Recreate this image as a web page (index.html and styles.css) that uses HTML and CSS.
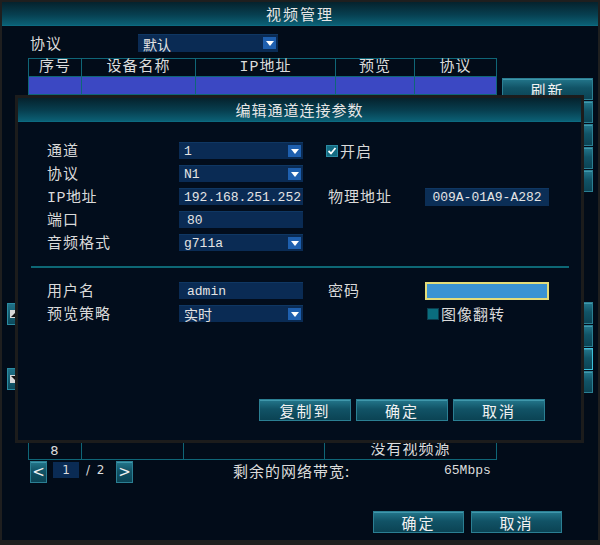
FILE: index.html
```html
<!DOCTYPE html>
<html lang="zh">
<head>
<meta charset="utf-8">
<title>视频管理</title>
<link rel="stylesheet" href="styles.css">
</head>
<body>
<div class="win">
  <div class="titlebar">视频管理</div>
  <div class="proto-row">
    <span class="lbl top-lbl">协议</span>
    <div class="field select w140"><span>默认</span><i class="arrow"></i></div>
  </div>
  <div class="middle">
    <div class="gutter">
      <div class="scroll-btn first"><svg width="8" height="8" viewBox="0 0 8 8"><rect width="8" height="8" fill="#d8d8d8"/><path d="M1 7 L7 7 L7 1 Z" fill="#111"/></svg></div>
      <div class="scroll-btn second"><svg width="8" height="8" viewBox="0 0 8 8"><rect width="8" height="8" fill="#d8d8d8"/><path d="M1 1 L7 1 L7 7 Z" fill="#111"/></svg></div>
    </div>
    <div class="tables">
      <div class="tbl t1">
        <div class="row head"><div>序号</div><div>设备名称</div><div>IP地址</div><div>预览</div><div>协议</div></div>
        <div class="row sel"><div></div><div></div><div></div><div></div><div></div></div>
        <div class="row"><div></div><div></div><div></div><div></div><div></div></div>
        <div class="row"><div></div><div></div><div></div><div></div><div></div></div>
        <div class="row"><div></div><div></div><div></div><div></div><div></div></div>
        <div class="row"><div></div><div></div><div></div><div></div><div></div></div>
        <div class="row"><div></div><div></div><div></div><div></div><div></div></div>
        <div class="row"><div></div><div></div><div></div><div></div><div></div></div>
        <div class="row"><div></div><div></div><div></div><div></div><div></div></div>
      </div>
      <div class="tbl t2">
        <div class="row head"><div></div><div></div><div></div><div></div></div>
        <div class="row"><div></div><div></div><div></div><div></div></div>
        <div class="row"><div></div><div></div><div></div><div></div></div>
        <div class="row"><div></div><div></div><div></div><div></div></div>
        <div class="row"><div></div><div></div><div></div><div></div></div>
        <div class="row"><div></div><div></div><div></div><div></div></div>
        <div class="row"><div></div><div></div><div></div><div></div></div>
        <div class="row"><div></div><div></div><div></div><div></div></div>
        <div class="row"><div>8</div><div></div><div></div><div>没有视频源</div></div>
      </div>
      <div class="pager">
        <div class="btn page-btn">&lt;</div>
        <div class="page-box">1</div>
        <span class="page-total">/ 2</span>
        <div class="btn page-btn">&gt;</div>
        <span class="bw-lbl">剩余的网络带宽:</span>
        <span class="bw-val">65Mbps</span>
      </div>
    </div>
    <div class="side">
      <div class="btn side-btn">刷新</div>
      <div class="btn side-btn"></div>
      <div class="btn side-btn"></div>
      <div class="btn side-btn"></div>
      <div class="btn side-btn"></div>
      <div class="btn side-btn gap-top"></div>
      <div class="btn side-btn"></div>
      <div class="btn side-btn focus"></div>
      <div class="btn side-btn"></div>
    </div>
  </div>
  <div class="footer">
    <div class="btn foot-btn">确定</div>
    <div class="btn foot-btn">取消</div>
  </div>

  <div class="dialog">
    <div class="dlg-title">编辑通道连接参数</div>
    <div class="form first-form">
      <span class="lbl">通道</span>
      <div class="field select"><span class="mono">1</span><i class="arrow"></i></div>
      <span></span>
      <div class="check-line"><i class="check on"><svg width="10" height="10" viewBox="0 0 10 10"><path d="M1.5 5 L4 7.5 L8.5 2" stroke="#fff" stroke-width="1.8" fill="none"/></svg></i><span class="lbl">开启</span></div>

      <span class="lbl">协议</span>
      <div class="field select"><span class="mono">N1</span><i class="arrow"></i></div>
      <span></span><span></span><span></span>

      <span class="lbl lbl-latin">IP地址</span>
      <div class="field"><span class="mono">192.168.251.252</span></div>
      <span></span>
      <span class="lbl lbl2">物理地址</span>
      <div class="field mac"><span class="mono">009A-01A9-A282</span></div>

      <span class="lbl">端口</span>
      <div class="field"><span class="mono pad-port">80</span></div>
      <span></span><span></span><span></span>

      <span class="lbl">音频格式</span>
      <div class="field select"><span class="mono">g711a</span><i class="arrow"></i></div>
      <span></span><span></span><span></span>
    </div>
    <div class="sep"></div>
    <div class="form second-form">
      <span class="lbl">用户名</span>
      <div class="field"><span class="mono pad-user">admin</span></div>
      <span></span>
      <span class="lbl lbl2">密码</span>
      <div class="field pwd"></div>

      <span class="lbl">预览策略</span>
      <div class="field select"><span>实时</span><i class="arrow"></i></div>
      <span></span>
      <span></span>
      <div class="check-line flip"><i class="check off"></i><span class="lbl">图像翻转</span></div>
    </div>
    <div class="dlg-buttons">
      <div class="btn dlg-btn">复制到</div>
      <div class="btn dlg-btn">确定</div>
      <div class="btn dlg-btn">取消</div>
    </div>
  </div>
</div>
</body>
</html>
```

FILE: styles.css
```css
html, body {
  margin: 0;
  padding: 0;
  background: #000;
}

body {
  font-family: "Liberation Mono", "Noto Sans CJK SC", monospace;
  color: #dcdcdc;
}

.win {
  position: relative;
  width: 600px;
  height: 545px;
  box-sizing: border-box;
  border: 2px solid #1f1f1f;
  border-bottom-width: 5px;
  background: #020c19;
  overflow: hidden;
}

.titlebar {
  height: 24px;
  line-height: 24px;
  text-align: center;
  font-family: "Noto Sans CJK SC", sans-serif;
  font-size: 15px;
  letter-spacing: 2px;
  color: #e6e6e6;
  background: linear-gradient(to bottom, #05222d 0%, #073f50 55%, #0b6075 100%);
  border-bottom: 1px solid #0c6a80;
  box-sizing: border-box;
}

.lbl {
  font-family: "Noto Sans CJK SC", sans-serif;
  font-size: 15px;
  letter-spacing: 1px;
  color: #dadada;
  white-space: nowrap;
  margin-top: -2px;
}

.lbl-latin {
  font-family: "Liberation Mono", "Noto Sans CJK SC", monospace;
  letter-spacing: 0.5px;
}

.mono {
  font-family: "Liberation Mono", monospace;
  font-size: 13px;
  letter-spacing: 0;
  color: #e4e4e4;
}

.proto-row {
  display: flex;
  align-items: center;
  margin-top: 8px;
  height: 18px;
  padding-left: 28px;
}

.top-lbl {
  width: 108px;
}

.field {
  position: relative;
  box-sizing: border-box;
  height: 17px;
  background: #0a2b54;
  border-top: 1px solid #0f3763;
  display: flex;
  align-items: center;
  padding-left: 5px;
  font-family: "Noto Sans CJK SC", sans-serif;
  font-size: 14px;
  color: #e2e2e2;
}

.w140 {
  width: 140px;
  height: 18px;
}

.arrow {
  position: absolute;
  right: 2px;
  top: 2px;
  width: 13px;
  height: 12px;
  background: #1e5fae;
  display: flex;
  align-items: center;
  justify-content: center;
}

.arrow::after {
  content: "";
  border-left: 4px solid transparent;
  border-right: 4px solid transparent;
  border-top: 5px solid #fff;
}

.middle {
  display: flex;
  margin-top: 6px;
}

.gutter {
  width: 26px;
  display: flex;
  flex-direction: column;
}

.scroll-btn {
  width: 20px;
  height: 22px;
  margin-left: 5px;
  box-sizing: border-box;
  border: 1px solid #2a8aa0;
  background: linear-gradient(#1f7187, #0c495b);
  display: flex;
  align-items: center;
  padding-left: 2px;
}

.scroll-btn.first { margin-top: 245px; }
.scroll-btn.second { margin-top: 43px; }

.tables {
  width: 469px;
  display: flex;
  flex-direction: column;
}

.tbl {
  border-left: 1px solid #0f6677;
  border-top: 1px solid #0f6677;
}

.row {
  display: grid;
  height: 18px;
}

.t1 .row { grid-template-columns: 53px 114px 140px 79px 82px; }
.t2 .row { grid-template-columns: 53px 102px 141px 172px; }

.row > div {
  box-sizing: border-box;
  border-right: 1px solid #0f6677;
  border-bottom: 1px solid #0f6677;
  text-align: center;
  font-family: "Liberation Mono", "Noto Sans CJK SC", sans-serif;
  font-size: 15px;
  line-height: 17px;
  letter-spacing: 1px;
  color: #dcdcdc;
}

.row.head { height: 18px; }
.row.sel > div { background: #3b48c3; }

.t2 { margin-top: 76px; }

.t2 .row > div:first-child {
  font-family: "DejaVu Sans", sans-serif;
  font-size: 13px;
}

.pager {
  display: flex;
  align-items: center;
  margin-top: 1px;
  height: 22px;
}

.btn {
  box-sizing: border-box;
  display: flex;
  align-items: center;
  justify-content: center;
  border: 1px solid #2b7f93;
  background: linear-gradient(to bottom, #23768b 0%, #115366 45%, #0b4354 100%);
  box-shadow: inset 0 1px 0 #3f97ab;
  color: #f2f2f2;
  font-family: "Noto Sans CJK SC", sans-serif;
  font-size: 15px;
  letter-spacing: 2px;
  height: 22px;
}

.page-btn {
  width: 17px;
  font-family: "DejaVu Sans", sans-serif;
  font-size: 15px;
  letter-spacing: 0;
}

.page-btn:first-child { margin-left: 2px; }

.page-box {
  align-self: flex-start;
  margin-top: 1px;
  margin-left: 6px;
  width: 26px;
  height: 16px;
  background: #0a2b54;
  text-align: center;
  line-height: 16px;
  font-family: "DejaVu Sans", sans-serif;
  font-size: 12px;
  color: #dcdcdc;
}

.page-total {
  width: 37px;
  padding-left: 7px;
  box-sizing: border-box;
  font-family: "DejaVu Sans", sans-serif;
  font-size: 12px;
  word-spacing: 3px;
  margin-top: -4px;
}

.bw-lbl {
  margin-left: 100px;
  width: 211px;
  font-family: "Noto Sans CJK SC", sans-serif;
  font-size: 15px;
  letter-spacing: 1px;
  margin-top: -3px;
}

.bw-val {
  font-family: "Liberation Mono", monospace;
  font-size: 13px;
  margin-top: -3px;
}

.side {
  width: 91px;
  margin-left: 5px;
  margin-top: 20px;
  display: flex;
  flex-direction: column;
  gap: 1px;
}

.side-btn { width: 91px; }
.side-btn.gap-top { margin-top: 109px; }
.side-btn.focus { border-color: #3cc0dc; }

.footer {
  display: flex;
  justify-content: flex-end;
  gap: 7px;
  margin-top: 28px;
  padding-right: 36px;
}

.foot-btn { width: 91px; }

.dialog {
  position: absolute;
  left: 13px;
  top: 93px;
  width: 569px;
  height: 348px;
  box-sizing: border-box;
  border: 3px solid #1c1c1c;
  background: #020d1c;
  display: flex;
  flex-direction: column;
}

.dlg-title {
  height: 24px;
  line-height: 24px;
  flex: none;
  text-align: center;
  font-family: "Noto Sans CJK SC", sans-serif;
  font-size: 15px;
  letter-spacing: 1px;
  color: #e6e6e6;
  background: linear-gradient(to bottom, #05222d 0%, #073f50 55%, #0b6075 100%);
  border-bottom: 1px solid #0c6a80;
  box-sizing: border-box;
}

.form {
  display: grid;
  grid-template-columns: 132px 124px 23px 99px 124px;
  grid-auto-rows: 23px;
  align-items: center;
  padding-left: 29px;
}

.first-form { margin-top: 17px; }
.second-form { margin-top: 11px; }

.lbl2 { padding-left: 2px; }

.check-line {
  display: flex;
  align-items: center;
  gap: 2px;
  grid-column: span 2;
}

.check-line .lbl { margin-top: 0; }

.check {
  box-sizing: border-box;
  width: 12px;
  height: 12px;
  display: flex;
  align-items: center;
  justify-content: center;
}

.check.on {
  background: #136b82;
  border: 1px solid #2b8aa2;
}

.check.off {
  background: #0a6d7e;
  border: 1px solid #0b3e4e;
}

.check-line.flip {
  padding-left: 2px;
  grid-column: auto;
}

.mac {
  height: 18px;
  justify-content: center;
  padding-left: 0;
  background: #0b2e56;
}

.pad-port { padding-left: 3px; }
.pad-user { padding-left: 3px; }

.pwd {
  height: 18px;
  background: #3b93d2;
  border: 2px solid #e4dc78;
}

.sep {
  height: 2px;
  margin: 12px 12px 0 13px;
  background: #0d6775;
}

.dlg-buttons {
  display: flex;
  justify-content: flex-end;
  gap: 5px;
  margin-top: 74px;
  padding-right: 36px;
}

.dlg-btn { width: 92px; }
```
